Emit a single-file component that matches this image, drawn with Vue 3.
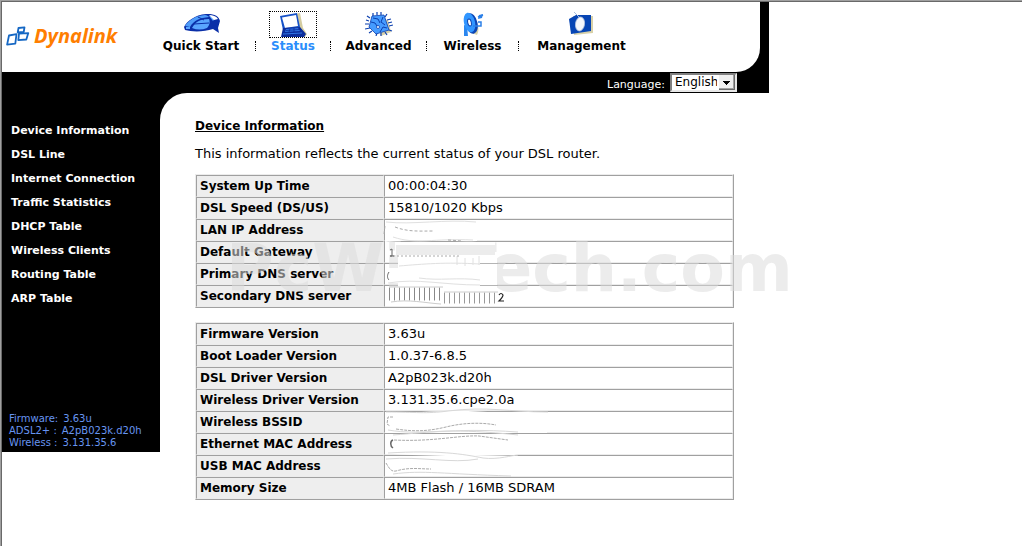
<template>
  <div class="page">
    <div class="shell">
      <header class="top">
        <div class="masthead">
          <a class="logo" href="#" aria-label="Dynalink">
            <svg class="mark" viewBox="0 0 24 22" width="24" height="22">
              <g fill="#fff" stroke="#1668c4" stroke-width="1.800" stroke-linejoin="round">
                <path d="M12.500 3l6-.6-.8 4.600-6 .5z" />
                <path d="M3 10.500l7.500-1.400-1.200 9.500-8.200 1z" />
                <path d="M13 8.600l9.300-.5-2 6.400-8 .7z" />
              </g>
            </svg>
            <span class="brand">Dynalink</span>
          </a>
          <nav class="menu">
            <template v-for="(item, i) in menu" :key="item.label">
              <span v-if="i" class="dots"></span>
              <a href="#" class="item" :class="[item.icon, { active: item.label === current }]" @click.prevent="current = item.label">
                <span class="icon">
                  <svg v-if="item.icon === 'mouse'" viewBox="0 0 40 24" width="40" height="24">
                    <path d="M3 15C6 9 14 3 25 2c8-.5 13 2 14 7l-2 7 1 5-6-4c-9 3-21 3-28 1z" fill="#0a2fa8" />
                    <path d="M4 14C8 8 14 4 24 3c2 0 3 1 4 2-9 1-15 3-19 10z" fill="#4f9dfa" />
                    <path d="M11 16c3-6 8-9 17-9 1 2 1 6-2 9-5 2-10 2-15 0z" fill="#5aa6ff" />
                    <path d="M5 15l4 0 0 2-4 0zM28 4l7 1-3 4z" fill="#5aa6ff" />
                    <path d="M28 3c4 0 7 1 9 4l-4 1z" fill="#fff" />
                    <path d="M17 5l6 3M13 12l15-1" fill="none" stroke="#0a2fa8" />
                  </svg>
                  <svg v-else-if="item.icon === 'laptop'" viewBox="0 0 30 24" width="30" height="24">
                    <path d="M6 3l16-3 3 15 4 6-2 3H6z" fill="#d4cca0" />
                    <path d="M2 3L19 0l3 14L5 17z" fill="#1551c8" />
                    <path d="M4 4.500L18 2l2 11L7 15z" fill="#fff" />
                    <path d="M5 15l17-1 6 7-2 3H3z" fill="#0b2d9c" />
                    <path d="M8 16l12-1 2 3-15 1z" fill="#2f74e4" />
                    <path d="M5 21l19-1" stroke="#2f74e4" />
                    <path d="M8 17.500l13-1M12 16l-1 3M16 15v4" stroke="#0b2d9c" stroke-width=".8" />
                  </svg>
                  <svg v-else-if="item.icon === 'chip'" viewBox="0 0 28 24" width="28" height="24">
                    <path d="M9 6l14 2 3 12-10 4z" fill="#d8d1a8" />
                    <path d="M8 4V1M12 3V0M16 3V0M20 5l2-3M22 8l4-1M23 11l4-1M24 14l4-1M24 18l3 1M20 20l2 3M16 21v3M12 21l-1 3M7 19l-3 2M5 16l-5 1M4 12H0M4 9L1 8M5 6L2 4" stroke="#0b3fae" stroke-width="1.200" />
                    <path d="M7 4l12-1 5 15-13 4-7-7z" fill="#459bff" stroke="#0b3fae" stroke-width=".8" />
                    <path d="M8 6l5 1 2 4M6 10l4 1 2 3M18 5l-2 5 4 3M15 20l3-5 4 1" fill="none" stroke="#0b3fae" />
                    <circle cx="13" cy="15" r="1.500" fill="#fff" stroke="#0b3fae" stroke-width=".8" />
                  </svg>
                  <svg v-else-if="item.icon === 'dish'" viewBox="0 0 22 24" width="22" height="24">
                    <path d="M11 6c5 4 7 11 4 17l-5-2z" fill="#d8d1a8" />
                    <path d="M2 13l3 1 1 10H2z" fill="#2c87ef" />
                    <ellipse cx="9.500" cy="11.500" rx="6" ry="10.500" fill="#0c45b4" transform="rotate(-13 9.500 11.500)" />
                    <ellipse cx="7.500" cy="10.500" rx="5.500" ry="10" fill="#3196ff" transform="rotate(-13 7.500 10.500)" />
                    <ellipse cx="7.500" cy="10.500" rx="1.800" ry="3.500" fill="#fff" stroke="#0c45b4" transform="rotate(-13 7.500 10.500)" />
                    <path d="M11 14h8v-4h-3M16 5l5-2" fill="none" stroke="#2c80e8" stroke-width="1.500" />
                    <path d="M17 3l4-1-1 4-4 1z" fill="#2c80e8" />
                  </svg>
                  <svg v-else viewBox="0 0 26 24" width="26" height="24">
                    <path d="M4 4l20 0v17L5 23z" fill="#d8d1a8" />
                    <path d="M0 7L7 3h15v16L2 22z" fill="#0745b4" />
                    <path d="M5 0l6 6" stroke="#a9bddd" />
                    <ellipse cx="11" cy="12" rx="4.500" ry="7" fill="#f6f7fb" stroke="#b7c5df" stroke-width=".8" transform="rotate(8 11 12)" />
                  </svg>
                </span>
                <span class="caption">{{ item.label }}</span>
              </a>
            </template>
          </nav>
        </div>
      </header>

      <div class="langbar">
        <label for="language">Language:</label>
        <span class="picker">
          <select id="language" v-model="language">
            <option>English</option>
          </select>
          <svg class="arrow" viewBox="0 0 16 15" width="16" height="15">
            <path d="M0 0h16v15H0z" fill="#696969" />
            <path d="M0 0h15v14H0z" fill="#a0a0a0" />
            <path d="M0 0h14v13H0z" fill="#f0f0f0" />
            <path d="M4 6h7v1h-1v1H9v1H8v1H7V9H6V8H5V7H4z" fill="#000" />
          </svg>
        </span>
      </div>

      <div class="body">
        <aside class="side">
          <ul>
            <li v-for="link in links" :key="link"><a href="#">{{ link }}</a></li>
          </ul>
          <dl class="versions">
            <div v-for="v in versions" :key="v[0]">
              <dt>{{ v[0] }}</dt>
              <dd>{{ v[1] }}</dd>
            </div>
          </dl>
        </aside>

        <main class="content">
          <h1>Device Information</h1>
          <p>This information reflects the current status of your DSL router.</p>

          <div class="block">
            <table>
              <tbody>
                <tr v-for="row in status" :key="row[0]">
                  <th scope="row">{{ row[0] }}</th>
                  <td>{{ row[1] }}</td>
                </tr>
              </tbody>
            </table>
            <div class="watermark">PcWinTech.com</div>
            <svg class="smear" viewBox="0 0 539 134" width="539" height="134" aria-hidden="true">
              <path d="M190 50c20-6 70 0 92-1v18c-30 1-60-3-92 1z" fill="#fff" />
              <path d="M200 68h100v13H200z" fill="#fff" />
              <path d="M201 71h99v10h-99z" fill="#ececec" />
              <path d="M203 81h99v34h-99zM191 94h20v15h-20z" fill="#fff" />
              <path d="M285 89.500h18M285 111.500h18" stroke="#b4b4b4" />
              <g fill="none" stroke="#e0e0e0">
                <path d="M191 48c26 3 60-3 90 0M198 63c24 8 40 1 80 3M193 109c30-5 54 2 92 2M204 92c25-2 45 -4 81 -2" />
                <path d="M224 104c20 3 40-1 61 2M262 82v9M270 84v8M278 84v7M284 82v9" />
              </g>
              <path d="M189 60l1-8M200 53c13 5 24 4 39 4M253 66l14 1" fill="none" stroke="#aaa" stroke-dasharray="3 2" />
              <path d="M198 82h66" stroke="#aaa" stroke-dasharray="2 2" />
              <path d="M195 76l2-1v7h-2 4M194 98c-2 3-2 6 0 8" fill="none" stroke="#666" />
              <path d="M193 113h56v15h-56z" fill="#fff" />
              <path d="M248 115h55v15h-55z" fill="#fff" />
              <path d="M194 120h53" stroke="#888" stroke-width="13" stroke-dasharray="1 4" />
              <path d="M249 124h51" stroke="#999" stroke-width="11" stroke-dasharray="1 4" />
              <path d="M194 113h54M249 118h54M196 128c18-3 34 1 50 2" fill="none" stroke="#ccc" />
              <path d="M304 121q2-3 4 0c0 2-2 4-4 6h5" fill="none" stroke="#222" stroke-width="1.200" />
            </svg>
          </div>

          <div class="block">
            <table>
              <tbody>
                <tr v-for="row in hardware" :key="row[0]">
                  <th scope="row">{{ row[0] }}</th>
                  <td>{{ row[1] }}</td>
                </tr>
              </tbody>
            </table>
            <svg class="smear" viewBox="0 0 539 178" width="539" height="178" aria-hidden="true">
              <path d="M192 92c34-2 76-5 110-1 20 1 35 0 50 0v20H190z" fill="#fff" />
              <path d="M198 114c50-3 74 0 125-1v20c-40 1-70 2-125-1z" fill="#fff" />
              <path d="M191 135c50 4 70-2 125 1v17H191z" fill="#fff" />
              <g fill="none" stroke="#d8d8d8">
                <path d="M191 90c30 0 40 2 62-1 40-5 60 1 100 1M193 108c35 6 60-3 130 2M198 113c40-3 60-7 125 0" />
                <path d="M193 131c50-3 75 1 95 5 15 2 30-3 35-3M191 137c36-3 66 5 92 0M198 152c30-4 50 0 118 2" />
              </g>
              <g fill="none" stroke="#aaa" stroke-dasharray="3 1">
                <path d="M198 95h-5l-1 7 3 2M201 107c20 3 33 2 50-2 16-4 34-5 50-2" />
                <path d="M199 118c40 2 65-5 85-4l29 4M191 141c3 5 5 9 10 8 13-4 24-2 35-2" />
              </g>
              <path d="M198 118c-3 1-3 6 0 8" fill="none" stroke="#666" stroke-width="1.500" />
            </svg>
          </div>
        </main>
      </div>
    </div>
  </div>
</template>

<script setup>
import { ref } from 'vue';

const current = ref('Status');
const language = ref('English');

const menu = [
  { label: 'Quick Start', icon: 'mouse' },
  { label: 'Status', icon: 'laptop' },
  { label: 'Advanced', icon: 'chip' },
  { label: 'Wireless', icon: 'dish' },
  { label: 'Management', icon: 'panel' },
];

const links = [
  'Device Information',
  'DSL Line',
  'Internet Connection',
  'Traffic Statistics',
  'DHCP Table',
  'Wireless Clients',
  'Routing Table',
  'ARP Table',
];

const versions = [
  ['Firmware:', '3.63u'],
  ['ADSL2+ :', 'A2pB023k.d20h'],
  ['Wireless :', '3.131.35.6'],
];

const status = [
  ['System Up Time', '00:00:04:30'],
  ['DSL Speed (DS/US)', '15810/1020 Kbps'],
  ['LAN IP Address', ''],
  ['Default Gateway', ''],
  ['Primary DNS server', ''],
  ['Secondary DNS server', ''],
];

const hardware = [
  ['Firmware Version', '3.63u'],
  ['Boot Loader Version', '1.0.37-6.8.5'],
  ['DSL Driver Version', 'A2pB023k.d20h'],
  ['Wireless Driver Version', '3.131.35.6.cpe2.0a'],
  ['Wireless BSSID', ''],
  ['Ethernet MAC Address', ''],
  ['USB MAC Address', ''],
  ['Memory Size', '4MB Flash / 16MB SDRAM'],
];
</script>

<style>
body {
  margin: 0;
  background: #fff;
}
</style>

<style scoped>
.page {
  box-sizing: border-box;
  min-height: 100vh;
  padding: 1px 0 0 1px;
  border-top: 1px solid #a0a0a0;
  border-left: 1px solid #a0a0a0;
  box-shadow: inset 1px 1px #696969;
  font-family: Verdana, "DejaVu Sans", sans-serif;
  font-size: 12px;
  color: #000;
}

.shell {
  max-width: 767px;
}

.top {
  background: #000;
  padding-right: 9px;
}

.masthead {
  display: flex;
  height: 70px;
  background: #fff;
  border-bottom-right-radius: 24px;
}

.logo {
  display: flex;
  width: 145px;
  padding: 23px 0 0 4px;
  box-sizing: border-box;
  text-decoration: none;
}

.brand {
  margin-left: 4px;
  font: italic bold 20px/22px "Open Sans", sans-serif;
  color: #ff7e00;
}

.menu {
  display: flex;
  padding-top: 9px;
}

.item {
  display: flex;
  flex-direction: column;
  align-items: center;
  color: #000;
  font-weight: bold;
  text-decoration: none;
  white-space: nowrap;
}

.mouse {
  width: 108px;
}

.laptop {
  width: 74px;
}

.chip {
  width: 95px;
}

.dish {
  width: 91px;
}

.panel {
  width: 125px;
}

.icon {
  display: flex;
  justify-content: center;
  width: 46px;
  height: 25px;
  padding: 1px 0;
}

.active {
  color: #2a8dfb;
}

.active .icon {
  box-sizing: border-box;
  width: 48px;
  height: 27px;
  border: 1px dotted #000;
}

.caption {
  line-height: 16px;
}

.dots {
  height: 10px;
  margin-top: 30px;
  border-left: 1px dotted #000;
}

.langbar {
  display: flex;
  justify-content: flex-end;
  gap: 5px;
  height: 21px;
  padding-right: 32px;
  background: #000;
  color: #fff;
  font-size: 11px;
  line-height: 25px;
}

.picker {
  position: relative;
  height: 20px;
  padding-top: 1px;
}

.picker select {
  appearance: none;
  width: 67px;
  height: 19px;
  padding: 0 18px 0 3px;
  border: 2px solid;
  border-color: #808080 #e8e8e8 #e8e8e8 #808080;
  border-radius: 0;
  background: #fff;
  color: #000;
  font: 12px/15px "DejaVu Sans", sans-serif;
  vertical-align: top;
}

.arrow {
  position: absolute;
  top: 3px;
  right: 2px;
  pointer-events: none;
}

.body {
  display: flex;
  align-items: flex-start;
  background: linear-gradient(#000, #000) no-repeat 0 0 / 190px 30px;
}

.side {
  flex: none;
  width: 158px;
  background: #000;
}

.side ul {
  margin: 0;
  padding: 25px 0 0 9px;
  list-style: none;
}

.side li {
  height: 24px;
  line-height: 24px;
}

.side a {
  color: #fff;
  font-size: 11px;
  font-weight: bold;
  text-decoration: none;
}

.versions {
  margin: 0;
  padding: 103px 0 3px 7px;
  color: #6795f0;
  font-size: 10px;
  line-height: 12px;
}

.versions div {
  display: flex;
  gap: 5px;
}

.versions dd {
  margin: 0;
}

.content {
  flex: 1;
  min-width: 0;
  padding: 25px 35px 30px;
  border-top-left-radius: 27px;
  background: #fff;
}

h1 {
  margin: 0;
  font-size: 12px;
  line-height: 16px;
  text-decoration: underline;
}

p {
  margin: 12px 0;
  font-size: 13px;
  line-height: 16px;
}

.block {
  position: relative;
  margin-bottom: 14px;
}

table {
  width: 100%;
  border: 1px solid;
  border-color: #ececec #a0a0a0 #a0a0a0 #ececec;
  border-spacing: 0;
}

th,
td {
  box-sizing: border-box;
  height: 22px;
  padding: 0 3px;
  border: 1px solid;
  border-color: #a0a0a0 #ececec #ececec #a0a0a0;
  line-height: 16px;
  text-align: left;
  white-space: nowrap;
}

th {
  width: 188px;
  background: #eee;
  font-size: 12px;
}

td {
  font-size: 13px;
}

.watermark {
  position: absolute;
  top: 58px;
  left: 31px;
  color: rgba(220, 220, 220, 0.54);
  font-size: 65px;
  font-weight: bold;
  line-height: 74px;
  pointer-events: none;
}

.smear {
  position: absolute;
  top: 0;
  left: 0;
  pointer-events: none;
}
</style>
